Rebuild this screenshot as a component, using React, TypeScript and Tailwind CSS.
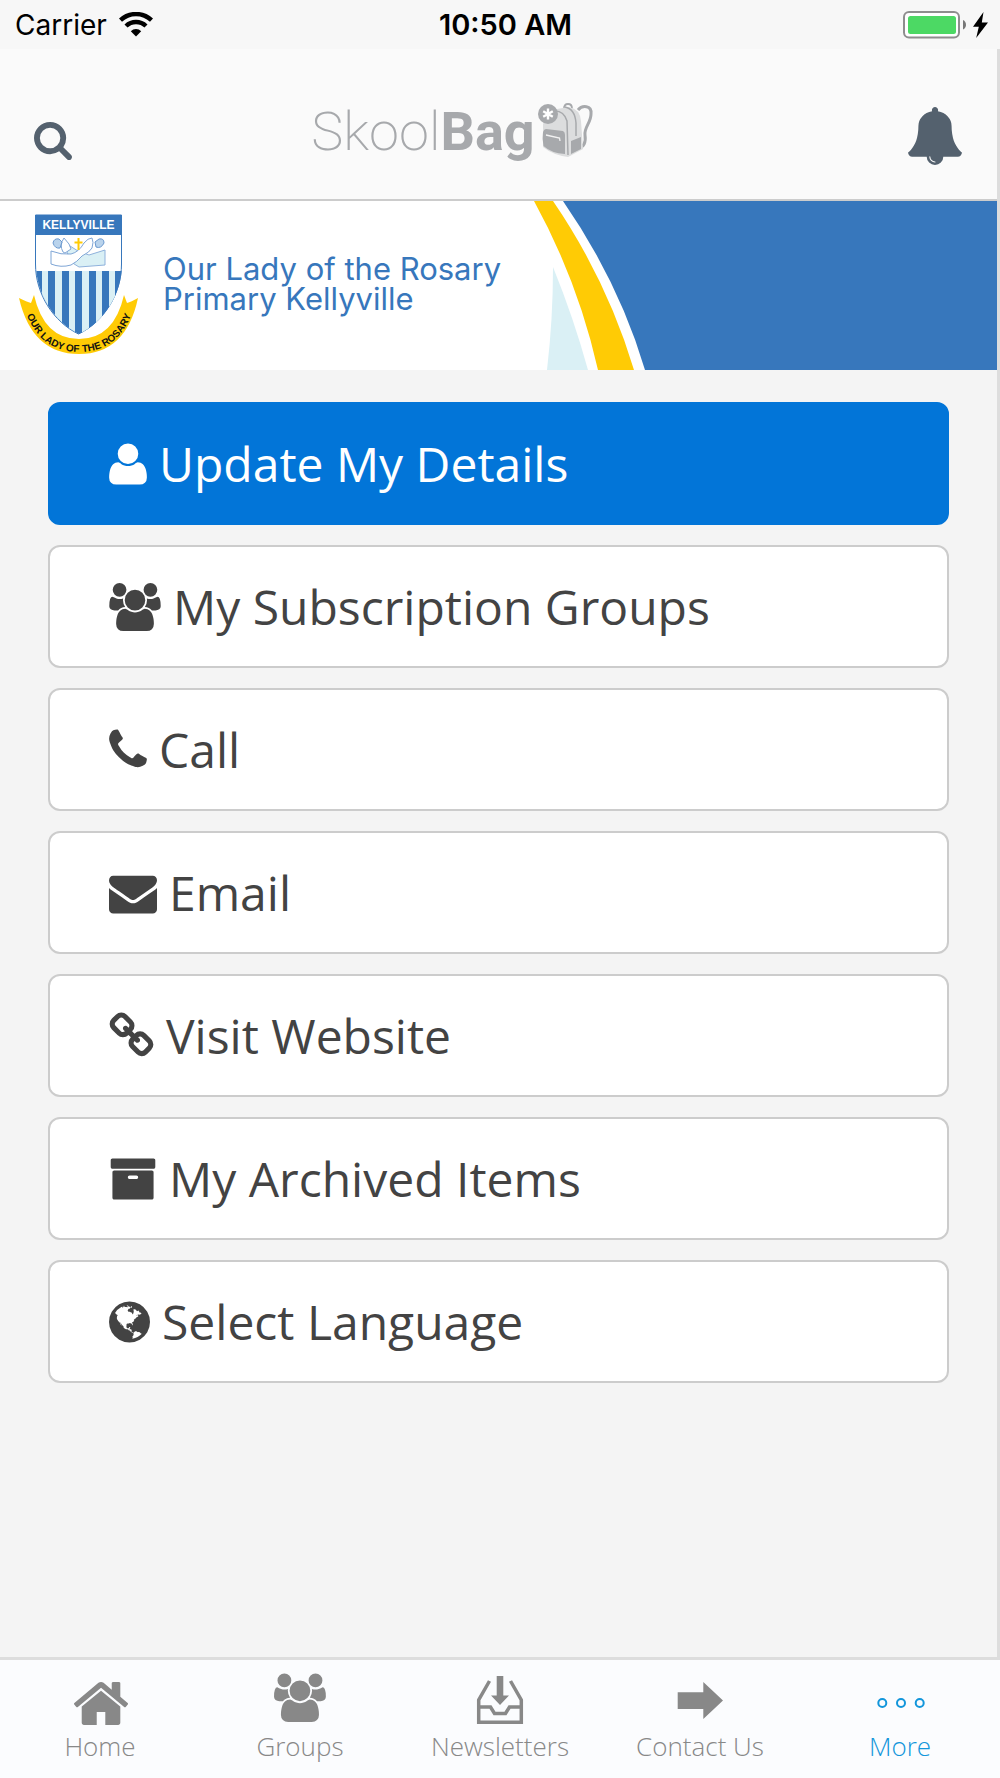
import React from 'react'

// Icon outlines on the classic 1792 unit grid
const paths = {
  user: 'M1600 1405q0 120-73 189.5t-194 69.5h-874q-121 0-194-69.5t-73-189.5q0-53 3.5-103.5t14-109 26.5-108.5 43-97.5 62-81 85.5-53.5 111.5-20q9 0 42 21.5t74.5 48 108 48 133.5 21.5 133.5-21.5 108-48 74.5-48 42-21.5q61 0 111.5 20t85.5 53.5 62 81 43 97.5 26.5 108.5 14 109 3.5 103.5zm-320-893q0 159-112.5 271.5t-271.5 112.5-271.5-112.5-112.5-271.5 112.5-271.5 271.5-112.5 271.5 112.5 112.5 271.5z',
  users: 'M657 896q-162 5-265 128h-134q-82 0-138-40.5t-56-118.5q0-353 124-353 6 0 43.5 21t97.5 42.5 119 21.5q67 0 133-23-5 37-5 66 0 139 81 256zm1071 637q0 120-73 189.5t-194 69.5h-874q-121 0-194-69.5t-73-189.5q0-53 3.5-103.5t14-109 26.5-108.5 43-97.5 62-81 85.5-53.5 111.5-20q10 0 43 21.5t73 48 107 48 135 21.5 135-21.5 107-48 73-48 43-21.5q61 0 111.5 20t85.5 53.5 62 81 43 97.5 26.5 108.5 14 109 3.5 103.5zm-1024-1277q0 106-75 181t-181 75-181-75-75-181 75-181 181-75 181 75 75 181zm704 384q0 159-112.5 271.5t-271.5 112.5-271.5-112.5-112.5-271.5 112.5-271.5 271.5-112.5 271.5 112.5 112.5 271.5zm576 225q0 78-56 118.5t-138 40.5h-134q-103-123-265-128 81-117 81-256 0-29-5-66 66 23 133 23 59 0 119-21.5t97.5-42.5 43.5-21q124 0 124 353zm-128-609q0 106-75 181t-181 75-181-75-75-181 75-181 181-75 181 75 75 181z',
  phone: 'M1600 1240q0 27-10 70.5t-21 68.5q-21 50-122 106-94 51-186 51-27 0-53-3.5t-57.5-12.5-47-14.5-55.5-20.5-49-18q-98-35-175-83-127-79-264-216t-216-264q-48-77-83-175-3-9-18-49t-20.5-55.5-14.5-47-12.5-57.5-3.5-53q0-92 51-186 56-101 106-122 25-11 68.5-21t70.5-10q14 0 21 3 18 6 53 76 11 19 30 54t35 63.5 31 53.5q3 4 17.5 25t21.5 35.5 7 28.5q0 20-28.5 50t-62 55-62 53-28.5 46q0 9 5 22.5t8.5 20.5 14 24 11.5 19q76 137 174 235t235 174q2 1 19 11.5t24 14 20.5 8.5 22.5 5q18 0 46-28.5t53-62 55-62 50-28.5q14 0 28.5 7t35.5 21.5 25 17.5q25 15 53.5 31t63.5 35 54 30q70 35 76 53 3 7 3 21z',
  envelope: 'M1792 710v794q0 66-47 113t-113 47h-1472q-66 0-113-47t-47-113v-794q44 49 101 87 362 246 497 345 57 42 92.5 65.5t94.5 48 110 24.5h2q51 0 110-24.5t94.5-48 92.5-65.5q170-123 498-345 57-39 100-87zm0-294q0 79-49 151t-122 123q-376 261-468 325-10 7-42.5 31t-54 38.5-52 32.5-57.5 27-50 9h-2q-23 0-50-9t-57.5-27-52-32.5-54-38.5-42.5-31q-91-64-262-182.5t-205-142.5q-62-42-117-115.5t-55-136.5q0-78 41.5-130t118.5-52h1472q65 0 112.5 47t47.5 113z',
  link: 'M1520 1216q0-40-28-68l-208-208q-28-28-68-28-42 0-72 32 3 3 19 18.5t21.5 21.5 15 19 13 25.5 3.5 27.5q0 40-28 68t-68 28q-15 0-27.5-3.5t-25.5-13-19-15-21.5-21.5-18.5-19q-33 31-33 73 0 40 28 68l206 207q27 27 68 27 40 0 68-26l147-146q28-28 28-67zm-703-705q0-40-28-68l-206-207q-28-28-68-28-39 0-68 27l-147 146q-28 28-28 67 0 40 28 68l208 208q27 27 68 27 42 0 72-31-3-3-19-18.5t-21.5-21.5-15-19-13-25.5-3.5-27.5q0-40 28-68t68-28q15 0 27.5 3.5t25.5 13 19 15 21.5 21.5 18.5 19q33-31 33-73zm895 705q0 120-85 203l-147 146q-83 83-203 83-121 0-204-85l-206-207q-83-83-83-203 0-123 88-209l-88-88q-86 88-208 88-120 0-204-84l-208-208q-84-84-84-204t85-203l147-146q83-83 203-83 121 0 204 85l206 207q83 83 83 203 0 123-88 209l88 88q86-88 208-88 120 0 204 84l208 208q84 84 84 204z',
  archive: 'M1088 832q0-26-19-45t-45-19h-256q-26 0-45 19t-19 45 19 45 45 19h256q26 0 45-19t19-45zm576-192v960q0 26-19 45t-45 19h-1408q-26 0-45-19t-19-45v-960q0-26 19-45t45-19h1408q26 0 45 19t19 45zm64-448v256q0 26-19 45t-45 19h-1536q-26 0-45-19t-19-45v-256q0-26 19-45t45-19h1536q26 0 45 19t19 45z',
  globe: 'M896 128q209 0 385.5 103t279.5 279.5 103 385.5-103 385.5-279.5 279.5-385.5 103-385.5-103-279.5-279.5-103-385.5 103-385.5 279.5-279.5 385.5-103zm274 521q-2 1-9.5 9.5t-13.5 9.5q2 0 4.5-5t5-11 3.5-7q6-7 22-15 14-6 52-12 34-8 51 11-2-2 9.5-13t14.5-12q3-2 15-4.5t15-7.5l2-22q-12 1-17.5-7t-6.5-21q0 2-6 8 0-7-4.5-8t-11.5 1-9 1q-10-3-15-7.5t-8-16.5-4-15q-2-5-9.5-11t-9.5-10q-1-2-2.5-5.5t-3-6.5-4-5.5-5.5-2.5-7 5-7.5 10-4.5 5q-3-2-6-1.5t-4.5 1-4.5 3-5 3.5q-3 2-8.5 3t-8.5 2q15-5-1-11-10-4-16-3 9-4 7.5-12t-8.5-14h5q-1-4-8.5-8.5t-17.5-8.5-13-6q-8-5-34-9.5t-33-.5q-5 6-4.5 10.5t4 14 3.5 12.5q1 6-5.5 13t-6.5 12q0 7 14 15.5t10 21.5q-3 8-16 16t-16 12q-5 8-1.5 18.5t10.5 16.5q2 2 1.5 4t-3.5 4.5-5.5 4-6.5 3.5l-3 2q-11 5-20.5-6t-13.5-26q-7-25-16-30-23-8-29 1-5-13-41-26-25-9-58-4 6-1 0-15-7-15-19-12 3-6 4-17.5t1-13.5q3-13 12-23 1-1 7-8.5t9.5-13.5.5-6q35 4 50-11 5-5 11.5-17t10.5-17q9-6 14-5.5t14.5 5.5 14.5 5q14 1 15.5-11t-7.5-20q12 1 3-17-4-7-8-9-12-4-27 5-8 4 2 8-1-1-9.5 10.5t-16.5 17.5-16-5q-1-1-5.5-13.5t-9.5-13.5q-8 0-16 15 3-8-11-15t-24-8q19-12-8-27-7-4-20.5-5t-19.5 4q-5 7-5.5 11.5t5 8 10.5 5.5 11.5 4 8.5 3q14 10 8 14-2 1-8.5 3.5t-11.5 4.5-6 4q-3 4 0 14t-2 14q-5-5-9-17.5t-7-16.5q7 9-25 6l-10-1q-4 0-16 2t-20.5 1-13.5-8q-4-8 0-20 1-4 4-2-4-3-11-9.5t-10-8.5q-46 15-94 41 6 1 12-1 5-2 13-6.5t10-5.5q34-14 42-7l5-5q14 16 20 25-7-4-30-1-20 6-22 12 7 12 5 18-4-3-11.5-10t-14.5-11-15-5q-16 0-22 1-146 80-235 222 7 7 12 8 4 1 5 9t2.5 11 11.5-3q9 8 3 19 1-1 44 27 19 17 21 21 3 11-10 18-1-2-9-9t-9-4q-3 5 .5 18.5t10.5 12.5q-7 0-9.5 16t-2.5 35.5-1 23.5l2 1q-3 12 5.5 34.5t21.5 19.5q-13 3 20 43 6 8 8 9 3 2 12 7.5t15 10 10 10.5q4 5 10 22.5t14 23.5q-2 6 9.5 20t10.5 23q-1 0-2.5 1t-2.5 1q3 7 15.5 14t15.5 13q1 3 2 10t3 11 8 2q2-20-24-62-15-25-17-29-3-5-5.5-15.5t-4.5-14.5q2 0 6 1.5t8.5 3.5 7.5 4 2 3q-3 7 2 17.5t12 18.5 17 19 12 13q6 6 14 19.5t0 13.5q9 0 20 10.5t17 19.5q5 8 8 26t5 24q2 7 8.5 13.5t12.5 9.5l16 8 13 7q5 2 18.5 10.5t21.5 11.5q10 4 16 4t14.5-2.5 13.5-3.5q15-2 29 15t21 21q36 19 55 11-2 1 .5 7.5t8 15.5 9 14.5 5.5 8.5q5 6 18 15t18 15q6-4 7-9-3 8 7 20t18 10q14-3 14-32-31 15-49-18 0-1-2.5-5.5t-4-8.5-2.5-8.5 0-7.5 5-3q9 0 10-3.5t-2-12.5-4-13q-1-8-11-20t-12-15q-5 9-16 8t-16-9q0 1-1.5 5.5t-1.5 6.5q-13 0-15-1 1-3 2.5-17.5t3.5-22.5q1-4 5.5-12t7.5-14.5 4-12.5-4.5-9.5-17.5-2.5q-19 1-26 20-1 3-3 10.5t-5 11.5-9 7q-7 3-24 2t-24-5q-13-8-22.5-29t-9.5-37q0-10 2.5-26.5t3-25-5.5-24.5q3-2 9-9.5t10-10.5q2-1 4.5-1.5t4.5 0 4-1.5 3-6q-1-1-4-3-3-3-4-3 7 3 28.5-1.5t27.5 1.5q15 11 22-2 0-1-2.5-9.5t-.5-13.5q5 27 29 9 3 3 15.5 5t17.5 5q3 2 7 5.5t5.5 4.5 5-.5 8.5-6.5q10 14 12 24 11 40 19 44 7 3 11 2t4.5-9.5 0-14-1.5-12.5l-1-8v-18l-1-8q-15-3-18.5-12t1.5-18.5 15-18.5q1-1 8-3.5t15.5-6.5 12.5-8q21-19 15-35 7 0 11-9-1 0-5-3t-7.5-5-4.5-2q9-5 2-16 5-3 7.5-11t7.5-10q9 12 21 2 7-8 1-16 5-7 20.5-10.5t18.5-9.5q7 2 8-2t1-12 3-12q4-5 15-9t13-5l17-11q3-4 0-4 18 2 31-11 10-11-6-20 3-6-3-9.5t-15-5.5q3-1 11.5-.5t10.5-1.5q15-10-7-16-17-5-43 12zm-163 877q206-36 351-189-3-3-12.5-4.5t-12.5-3.5q-18-7-24-8 1-7-2.5-13t-8-9-12.5-8-11-7q-2-2-7-6t-7-5.5-7.5-4.5-8.5-2-10 1l-3 1q-3 1-5.5 2.5t-5.5 3-4 3 0 2.5q-21-17-36-22-5-1-11-5.5t-10.5-7-10-1.5-11.5 7q-5 5-6 15t-2 13q-7-5 0-17.5t2-18.5q-3-6-10.5-4.5t-12 4.5-11.5 8.5-9 6.5-8.5 5.5-8.5 7.5q-3 4-6 12t-5 11q-2-4-11.5-6.5t-9.5-5.5q2 10 4 35t5 38q7 31-12 48-27 25-29 40-4 22 12 26 0 7-8 20.5t-7 21.5q0 6 2 16z',
  search: 'M1216 832q0-185-131.5-316.5t-316.5-131.5-316.5 131.5-131.5 316.5 131.5 316.5 316.5 131.5 316.5-131.5 131.5-316.5zm512 832q0 52-38 90t-90 38q-54 0-90-38l-343-342q-179 124-399 124-143 0-273.5-55.5t-225-150-150-225-55.5-273.5 55.5-273.5 150-225 225-150 273.5-55.5 273.5 55.5 225 150 150 225 55.5 273.5q0 220-124 399l343 343q37 37 37 90z',
  bell: 'M912 1696q0-16-16-16-59 0-101.5-42.5t-42.5-101.5q0-16-16-16t-16 16q0 73 51.5 124.5t124.5 51.5q16 0 16-16zm816-288q0 52-38 90t-90 38h-448q0 106-75 181t-181 75-181-75-75-181h-448q-52 0-90-38t-38-90q50-42 91-88t85-119.5 74.5-158.5 50-206 19.5-260q0-152 117-282.5t307-158.5q-8-19-8-39 0-40 28-68t68-28 68 28 28 68q0 20-8 39 190 28 307 158.5t117 282.5q0 139 19.5 260t50 206 74.5 158.5 85 119.5 91 88z',
  home: 'M1472 992v480q0 26-19 45t-45 19h-384v-384h-256v384h-384q-26 0-45-19t-19-45v-480q0-1 .5-3t.5-3l575-474 575 474q1 2 1 6zm223-69l-62 74q-8 9-21 11h-3q-13 0-21-7l-692-577-692 577q-12 8-24 7-13-2-21-11l-62-74q-8-10-7-23.5t11-21.5l719-599q32-26 76-26t76 26l244 204v-195q0-14 9-23t23-9h192q14 0 23 9t9 23v408l219 182q10 8 11 21.5t-7 23.5z',
}

interface IconProps {
  d: string
  viewBox: string
  className: string
}

const Icon: React.FC<IconProps> = ({ d, viewBox, className }) => (
  <svg viewBox={viewBox} className={`shrink-0 fill-current ${className}`} aria-hidden="true">
    <path d={d} />
  </svg>
)

const menuItems = [
  { label: 'Update My Details', d: paths.user, viewBox: '192 0 1408 1792', size: 'h-12 w-[38px]', primary: true },
  { label: 'My Subscription Groups', d: paths.users, viewBox: '64 0 1920 1792', size: 'h-12 w-[52px]' },
  { label: 'Call', d: paths.phone, viewBox: '192 0 1408 1792', size: 'h-12 w-[38px]' },
  { label: 'Email', d: paths.envelope, viewBox: '0 0 1792 1792', size: 'h-12 w-12' },
  { label: 'Visit Website', d: paths.link, viewBox: '64 0 1664 1792', size: 'h-12 w-[45px]' },
  { label: 'My Archived Items', d: paths.archive, viewBox: '0 0 1792 1792', size: 'h-12 w-12' },
  { label: 'Select Language', d: paths.globe, viewBox: '128 0 1536 1792', size: 'h-12 w-[41px]' },
]

const StatusBar: React.FC = () => (
  <div className="grid h-[49px] grid-cols-3 items-center bg-[#f7f7f7] pr-3 pl-[15px] font-['Inter',sans-serif] text-[28px] leading-none text-black">
    <div className="flex items-center gap-3">
      <span>Carrier</span>
      <svg viewBox="0 0 34 25" className="h-[25px] w-[34px]" aria-hidden="true">
        <path d="M1.5 8.2a22.5 22.5 0 0 1 31 0" fill="none" stroke="#000" strokeWidth="4.4" />
        <path d="M7 14a14.5 14.5 0 0 1 20 0" fill="none" stroke="#000" strokeWidth="4.4" />
        <path d="M11.8 19.2a7.5 7.5 0 0 1 10.4 0L17 24.5z" />
      </svg>
    </div>
    <span className="pl-2 text-center text-[29px] font-semibold">10:50 AM</span>
    <div className="flex items-center justify-end gap-[7px]">
      <svg viewBox="0 0 63 28" className="h-7 w-[63px]" aria-hidden="true">
        <rect x="1" y="1" width="55" height="25.5" rx="5" fill="#fff" stroke="#8e8e8e" strokeWidth="2" />
        <rect x="5" y="5" width="48" height="18" rx="2.5" fill="#4cd964" />
        <path d="M60 9q3 1.500 3 4.800T60 18.600z" fill="#777" />
      </svg>
      <svg viewBox="0 0 15 26" className="h-[26px] w-[15px]" aria-hidden="true">
        <path d="M10.500 0 0 14.800h5.800L3.200 26 15 10.500H8.800z" />
      </svg>
    </div>
  </div>
)

const Backpack: React.FC = () => (
  <svg viewBox="0 0 60 60" className="h-[60px] w-[60px]" aria-hidden="true">
    <path d="M29 6.500q0-4.500 4-4.500t4 4.500" fill="none" stroke="#a7a9ac" strokeWidth="1.800" />
    <path d="M43 8c4-5 14-5 13 4 0 9-7 13-6 21 1 7-1 13-7 12" fill="none" stroke="#a7a9ac" strokeWidth="3" />
    <path d="M16 8 34 5q11 2 12 14l2 28-15 8Q18 53 8 45V22z" fill="#dcddde" />
    <path d="M20 9q9 0 12 10l1 34" fill="none" stroke="#a7a9ac" strokeWidth="1.500" />
    <path d="M30 5q10 2 11 16v13" fill="none" stroke="#a7a9ac" strokeWidth="1.500" />
    <path d="M11 27l17 2q2 1 2 4v19Q16 51 8.500 44 7 36 8 30q1-3 3-3z" fill="#a7a9ac" />
    <path d="m11 33 13.500 3 .5 3" fill="none" stroke="#f2f2f2" strokeWidth="1.300" />
    <path d="m36 39 10-4v12l-10 5z" fill="#a7a9ac" />
    <circle cx="13" cy="12" r="10" fill="#a7a9ac" />
    <path d="M13 6.500v11M8.200 9.300l9.600 5.400M8.200 14.700l9.600-5.400" stroke="#fff" strokeWidth="2.400" />
  </svg>
)

const Header: React.FC = () => (
  <header className="flex h-[152px] items-center justify-between border-b-2 border-[#ccc] bg-[#fafafa] pr-[35px] pl-[34px] text-[#54616e]">
    <button aria-label="Search" className="pt-[34px]">
      <Icon d={paths.search} viewBox="64 128 1664 1664" className="h-[38px] w-[38px]" />
    </button>
    <div className="flex items-center pt-4 pr-[74px] font-['Roboto',sans-serif] text-[54px] leading-none text-[#a7a9ac]">
      <span className="font-extralight">Skool</span>
      <span className="font-bold">Bag</span>
      <Backpack />
    </div>
    <button aria-label="Notifications" className="pt-6">
      <Icon d={paths.bell} viewBox="64 0 1664 1792" className="h-[58px] w-[54px]" />
    </button>
  </header>
)

const Crest: React.FC = () => (
  <svg viewBox="0 0 120 169" className="h-[169px] w-[120px] shrink-0" role="img" aria-label="School crest">
    <defs>
      <clipPath id="shield">
        <path d="M17 55h86v8c0 30-18 58-43 70C35 121 17 93 17 63z" />
      </clipPath>
      <path id="ribbon" d="M6 109Q20 151 60 151T114 109" />
    </defs>
    <path d="M0 97q8 4 12 5l3-8q10 44 45 44t45-44l3 8q4-1 11-5-12 56-59 56T0 97z" fill="#ffcb05" />
    <path d="M16.500 14h86v49c0 30-18 58-43 70-25-12-43-40-43-70z" fill="#fff" stroke="#3777bc" />
    <path d="M16 14h87v20H16z" fill="#3777bc" />
    <g clipPath="url(#shield)">
      <path d="M16 70h88v65H16z" fill="#3777bc" />
      <path d="M23 70h6v65h-6zM36 70h7v65h-7zM50 70h6v65h-6zM63 70h7v65h-7zM77 70h6v65h-6zM90 70h6v65h-6z" fill="#daf0f5" />
    </g>
    <path d="m48 51 3-6 8 5 11 4 16-5v15l-26 2-8-5z" fill="#daf0f5" stroke="#8fb2dc" />
    <path d="M32 50q10 4 20 3 8-2 13-11 4-5 8-5 2 4 0 10-2 4-10 8-5 6-11 9-10 3-20-1z" fill="#fff" stroke="#7fa6d6" />
    <path d="M44 51q-4-7 1-14l5 6 2 5-6 4z" fill="#fff" stroke="#7fa6d6" />
    <path d="M34 42q1-5 6-4l3 3-2 6q-5 1-7-5zM76 41l4-3q5-1 5 4-3 6-8 4z" fill="#b9d3ec" stroke="#6c9ad0" />
    <path d="M59.500 37v12M55.500 41.500h8" stroke="#ffcb05" strokeWidth="2" />
    <text x="59.500" y="28" textAnchor="middle" fill="#fff" className="font-['Liberation_Sans',sans-serif] text-[12px] font-bold">KELLYVILLE</text>
    <text fill="#111" textAnchor="middle" className="font-['Liberation_Sans',sans-serif] text-[10px] font-bold">
      <textPath href="#ribbon" startOffset="50%">OUR LADY OF THE ROSARY</textPath>
    </text>
  </svg>
)

const Banner: React.FC = () => (
  <section className="flex h-[169px] bg-white">
    <div className="flex shrink-0 items-center pl-[19px]">
      <Crest />
      <p className="w-[385px] pb-1 pl-6 font-['Inter',sans-serif] text-[31px] leading-[30px] text-[#3777bc]">
        Our Lady of the Rosary
        <br />
        Primary Kellyville
      </p>
    </div>
    <svg viewBox="-20 0 121 169" className="h-[169px] w-[121px] shrink-0" aria-hidden="true">
      <path d="M9 66Q9 118 3 169h41Q30 118 9 66z" fill="#daf0f5" />
      <path d="M-10 0h19q54 79 81 169H54Q34 80-10 0z" fill="#ffcb05" />
      <path d="M19 0h82v169Q75 81 19 0z" fill="#3777bc" />
    </svg>
    <div className="flex-1 bg-[#3777bc]" />
  </section>
)

const tabs = [
  {
    label: 'Home',
    icon: <path d={paths.home} transform="translate(1 1.500) scale(.0335)" />,
  },
  {
    label: 'Groups',
    icon: <path d={paths.users} transform="translate(2.300 1.500) scale(.0270)" />,
  },
  {
    label: 'Newsletters',
    icon: (
      <>
        <path d="M19.500 9 8.700 28v22.300h42.600V28L40.500 9" fill="none" stroke="currentColor" strokeWidth="3.500" />
        <path d="M8 35h12.500l4 6.500h11l4-6.500H52" fill="none" stroke="currentColor" strokeWidth="3.500" />
        <path d="M26.700 4h6.600v19.500H39L30 33l-9-9.500h5.700z" />
      </>
    ),
  },
  {
    label: 'Contact Us',
    icon: <path d="M7.700 20.300h25.600V10L53 28.500 33.300 47V37H7.700z" />,
  },
  {
    label: 'More',
    active: true,
    icon: (
      <g fill="none" stroke="currentColor" strokeWidth="2">
        <circle cx="12.300" cy="31" r="4" />
        <circle cx="31" cy="31" r="4" />
        <circle cx="49.700" cy="31" r="4" />
      </g>
    ),
  },
]

const TabBar: React.FC = () => (
  <nav className="grid grid-cols-5 border-t-[3px] border-[#ddd] bg-[#fbfcfe] pt-3 pb-4">
    {tabs.map((tab) => (
      <a
        key={tab.label}
        href="#"
        className={`flex flex-col items-center gap-0.5 text-[26px] leading-8 font-light ${tab.active ? 'text-[#1296db]' : 'text-[#888]'}`}
      >
        <svg viewBox="0 0 60 56" className="h-14 w-[60px] fill-current" aria-hidden="true">
          {tab.icon}
        </svg>
        {tab.label}
      </a>
    ))}
  </nav>
)

const App: React.FC = () => {
  return (
    <div className="flex min-h-screen flex-col bg-[#f4f4f4] font-['Open_Sans',sans-serif]">
      <StatusBar />
      <div className="flex flex-1 flex-col border-r-[3px] border-[#ddd]">
        <Header />
        <Banner />
        <main className="flex flex-col gap-5 pt-8 pr-12 pb-8 pl-12">
          {menuItems.map((item) => (
            <button
              key={item.label}
              className={`flex h-[123px] items-center gap-3 rounded-xl border-2 px-[59px] text-left text-[48px] leading-none ${
                item.primary ? 'border-[#0275d8] bg-[#0275d8] text-white' : 'border-[#ccc] bg-white text-[#434343]'
              }`}
            >
              <Icon d={item.d} viewBox={item.viewBox} className={item.size} />
              {item.label}
            </button>
          ))}
        </main>
      </div>
      <TabBar />
    </div>
  )
}

export default App
